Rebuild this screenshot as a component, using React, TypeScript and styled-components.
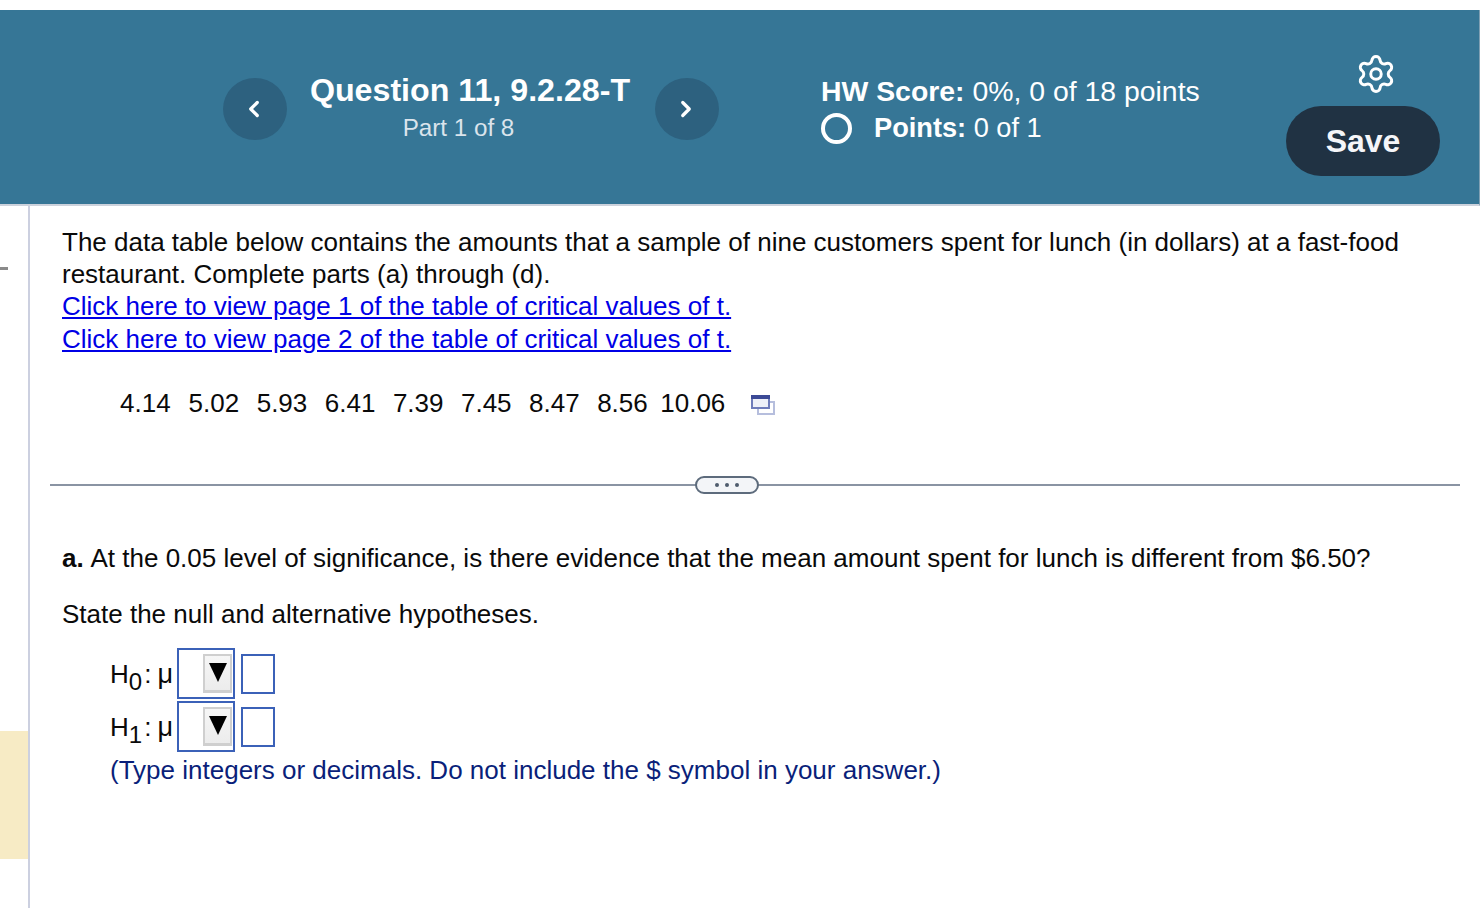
import React from 'react'
import styled, { createGlobalStyle } from 'styled-components'
import { ChevronLeft, ChevronRight, Settings } from 'lucide-react'

const GlobalStyle = createGlobalStyle`
  html, body {
    margin: 0;
    padding: 0;
    background: #fff;
  }
  body {
    font-family: "Liberation Sans", Arial, sans-serif;
    color: #0a0a0a;
  }
`

const values = ['4.14', '5.02', '5.93', '6.41', '7.39', '7.45', '8.47', '8.56', '10.06']

const CopyIcon = () => (
  <svg width="26" height="22" viewBox="0 0 26 22">
    <rect x="8" y="8" width="16" height="12" fill="#fff" stroke="#b6bedd" strokeWidth="2" />
    <rect x="2" y="2" width="17" height="12" fill="#eef0f8" stroke="#6f7cba" strokeWidth="2" />
    <rect x="1" y="1" width="19" height="4" fill="#3c4a96" />
  </svg>
)

interface HypothesisProps {
  index: number
}

const Hypothesis: React.FC<HypothesisProps> = ({ index }) => (
  <HypothesisRow>
    <Symbol>H<sub>{index}</sub><Colon>:</Colon><Mu>μ</Mu></Symbol>
    <SelectBox>
      <Arrow><span /></Arrow>
    </SelectBox>
    <AnswerBox />
  </HypothesisRow>
)

const App: React.FC = () => {
  return (
    <>
      <GlobalStyle />
      <Page>
        <Header>
          <NavButton><ChevronLeft size={26} strokeWidth={3} /></NavButton>
          <QuestionInfo>
            <QuestionTitle>Question 11, 9.2.28-T</QuestionTitle>
            <PartLabel>Part 1 of 8</PartLabel>
          </QuestionInfo>
          <NavButton><ChevronRight size={26} strokeWidth={3} /></NavButton>
          <ScoreBlock>
            <ScoreLine $size={28.4}><b>HW Score:</b> 0%, 0 of 18 points</ScoreLine>
            <ScoreLine $size={27.2}>
              <StatusRing />
              <b>Points:</b> 0 of 1
            </ScoreLine>
          </ScoreBlock>
          <Actions>
            <Settings size={42} strokeWidth={1.7} color="#fff" />
            <SaveButton>Save</SaveButton>
          </Actions>
        </Header>
        <Body>
          <Sidebar>
            <SideDash />
            <SideHighlight />
          </Sidebar>
          <Main>
            <Intro>
              <p>The data table below contains the amounts that a sample of nine customers spent for lunch (in dollars) at a fast-food restaurant. Complete parts (a) through (d).</p>
              <IntroLink>Click here to view page 1 of the table of critical values of t.</IntroLink>
              <IntroLink>Click here to view page 2 of the table of critical values of t.</IntroLink>
            </Intro>
            <DataRow>
              {values.map((v) => <DataCell key={v}>{v}</DataCell>)}
              <CopyButton><CopyIcon /></CopyButton>
            </DataRow>
            <Divider>
              <MorePill><i /><i /><i /></MorePill>
            </Divider>
            <QuestionText><b>a.</b> At the 0.05 level of significance, is there evidence that the mean amount spent for lunch is different from $6.50?</QuestionText>
            <StateText>State the null and alternative hypotheses.</StateText>
            <Hypotheses>
              <Hypothesis index={0} />
              <Hypothesis index={1} />
              <Hint>(Type integers or decimals. Do not include the $ symbol in your answer.)</Hint>
            </Hypotheses>
          </Main>
        </Body>
      </Page>
    </>
  )
}

const Page = styled.div`
  width: 1480px;
  height: 908px;
  padding-top: 10px;
  box-sizing: border-box;
  overflow: hidden;
`

// header
const Header = styled.header`
  height: 196px;
  box-sizing: border-box;
  background: #367696;
  border-bottom: 2px solid #ccd2dc;
  border-right: 1px solid #7f9fb3;
  padding: 68px 39px 0 223px;
  display: flex;
  align-items: flex-start;
`

const NavButton = styled.div`
  width: 64px;
  height: 62px;
  border-radius: 50%;
  background: #2d617f;
  color: #fff;
  display: flex;
  align-items: center;
  justify-content: center;
  flex-shrink: 0;
  svg {
    margin-left: -2px;
  }
`

const QuestionInfo = styled.div`
  width: 368px;
  text-align: center;
  color: #fff;
  margin-top: -7px;
`

const QuestionTitle = styled.div`
  font-size: 32.2px;
  font-weight: 700;
  line-height: 36px;
  margin-top: 1px;
  padding-right: 2px;
`

const PartLabel = styled.div`
  font-size: 24.2px;
  line-height: 40px;
  color: #dbe4ec;
  width: 336px;
  padding-left: 7px;
  box-sizing: border-box;
`

const ScoreBlock = styled.div`
  margin-left: 102px;
  width: 465px;
  color: #fff;
  margin-top: -5px;
`

const ScoreLine = styled.div<{ $size: number }>`
  font-size: ${(props) => props.$size}px;
  line-height: 36px;
  display: flex;
  align-items: center;
  white-space: pre;
  b {
    font-weight: 700;
  }
  & + & {
    margin-top: 1px;
  }
`

const StatusRing = styled.span`
  width: 31px;
  height: 31px;
  box-sizing: border-box;
  border: 4px solid #fff;
  border-radius: 50%;
  margin-right: 22px;
`

const Actions = styled.div`
  width: 154px;
  margin-top: -25px;
  display: flex;
  flex-direction: column;
  align-items: center;
  svg {
    margin-left: 25px;
  }
`

const SaveButton = styled.div`
  width: 154px;
  height: 70px;
  margin-top: 11px;
  padding-top: 1px;
  box-sizing: border-box;
  border-radius: 35px;
  background: #203243;
  color: #f5f6f9;
  font-size: 32px;
  font-weight: 700;
  display: flex;
  align-items: center;
  justify-content: center;
`

// body
const Body = styled.div`
  display: flex;
  height: 702px;
`

const Sidebar = styled.aside`
  width: 30px;
  flex-shrink: 0;
  box-sizing: border-box;
  border-right: 2px solid #ccd0e0;
  padding-top: 61px;
`

const SideDash = styled.div`
  width: 8px;
  height: 3px;
  background: #8a8a8a;
`

const SideHighlight = styled.div`
  height: 128px;
  margin-top: 461px;
  background: #f7ebc5;
`

const Main = styled.main`
  flex: 1;
  padding: 20px 20px 0 20px;
  min-width: 0;
`

const Intro = styled.div`
  padding-left: 12px;
  font-size: 26px;
  line-height: 32px;
  p {
    margin: 0;
  }
`

const IntroLink = styled.a`
  display: block;
  color: #0000e6;
  text-decoration: underline;
  height: 32.5px;
`

const DataRow = styled.div`
  display: flex;
  align-items: center;
  margin: 32px 0 0 70px;
  height: 32px;
`

const DataCell = styled.div`
  width: 68.1px;
  font-size: 26px;
  line-height: 32px;
  &:first-child {
    width: 68.6px;
  }
  &:nth-child(9) {
    margin-left: -5px;
  }
`

const CopyButton = styled.div`
  margin-left: 22px;
  display: flex;
  margin-top: 4px;
`

const Divider = styled.div`
  margin-top: 65px;
  height: 2px;
  background: #8a94a3;
  display: flex;
  align-items: center;
  padding-left: 645px;
`

const MorePill = styled.div`
  width: 64px;
  height: 18px;
  box-sizing: border-box;
  border: 2px solid #5d6b7c;
  border-radius: 9px;
  background: #f3f5f8;
  display: flex;
  align-items: center;
  justify-content: center;
  gap: 6px;
  i {
    width: 4px;
    height: 4px;
    border-radius: 50%;
    background: #4f5c6d;
  }
`

const QuestionText = styled.div`
  padding-left: 12px;
  margin-top: 56px;
  font-size: 26px;
  line-height: 32px;
  b {
    margin-right: 1px;
  }
`

const StateText = styled.div`
  padding-left: 12px;
  margin-top: 24px;
  font-size: 26px;
  line-height: 32px;
`

const Hypotheses = styled.div`
  padding-left: 60px;
  margin-top: 17px;
`

const HypothesisRow = styled.div`
  display: flex;
  align-items: center;
  height: 53px;
`

const Symbol = styled.div`
  width: 67px;
  font-size: 26px;
  white-space: nowrap;
  padding-top: 2px;
  sub {
    font-size: 24px;
    line-height: 0;
    vertical-align: -7px;
  }
`

const Colon = styled.span`
  margin: 0 6px 0 2px;
`

const Mu = styled.span`
  font-size: 27px;
`

const SelectBox = styled.div`
  width: 58px;
  height: 51px;
  box-sizing: border-box;
  border: 2px solid #3b61b8;
  display: flex;
  justify-content: flex-end;
  align-items: center;
  padding-right: 1px;
`

const Arrow = styled.div`
  width: 29px;
  height: 39px;
  box-sizing: border-box;
  background: linear-gradient(#f6f6f6, #ececec);
  border: 2px solid #cfcfcf;
  border-bottom-width: 3px;
  display: flex;
  justify-content: center;
  padding-top: 7px;
  span {
    width: 0;
    height: 0;
    border-left: 9px solid transparent;
    border-right: 9px solid transparent;
    border-top: 19px solid #000;
  }
`

const AnswerBox = styled.div`
  width: 34px;
  height: 40px;
  box-sizing: border-box;
  margin: 1px 0 0 6px;
  border: 2px solid #3b61b8;
  background: #fff;
`

const Hint = styled.div`
  font-size: 26px;
  line-height: 32px;
  color: #0a1f7a;
  margin-top: 1px;
`

export default App
